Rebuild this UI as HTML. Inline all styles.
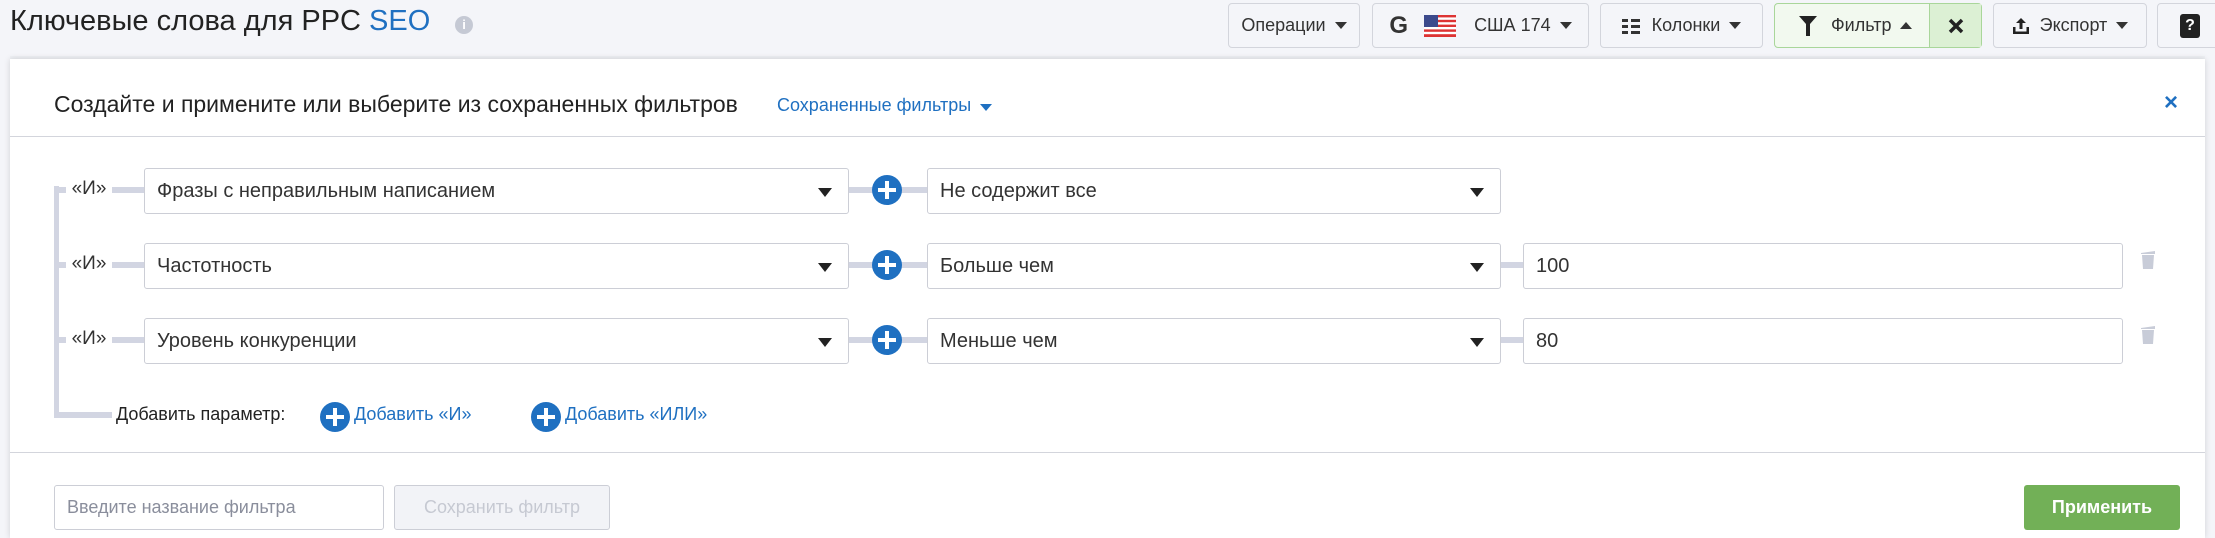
<!DOCTYPE html>
<html><head><meta charset="utf-8"><style>
*{box-sizing:border-box;margin:0;padding:0}
body{width:2215px;height:538px;background:#f4f5f9;font-family:"Liberation Sans","DejaVu Sans",sans-serif;color:#333;position:relative;overflow:hidden}
.a{position:absolute}
.btn{position:absolute;top:3px;height:45px;border:1px solid #d3d5dc;border-radius:4px;background:#f4f5f9;display:flex;align-items:center;justify-content:center;font-size:18px;color:#333}
.tri{display:inline-block;width:0;height:0;border-left:6px solid transparent;border-right:6px solid transparent;border-top:7px solid #333;margin-left:9px}
.triu{display:inline-block;width:0;height:0;border-left:6px solid transparent;border-right:6px solid transparent;border-bottom:7px solid #333;margin-left:9px}
.panel{position:absolute;left:10px;top:59px;width:2195px;height:479px;background:#fff;box-shadow:0 0 6px rgba(0,0,0,.15)}
.inp{position:absolute;height:46px;border:1px solid #ccced6;border-radius:3px;background:#fff;font-size:20px;color:#333;display:flex;align-items:center;padding-left:12px}
.dd::after{content:"";position:absolute;right:16px;top:19px;border-left:7px solid transparent;border-right:7px solid transparent;border-top:9px solid #222}
.and{position:absolute;font-size:19px;color:#333;width:44px;text-align:center}
.hl{position:absolute;height:6px;background:#d2d5e2}
.plus{position:absolute;width:30px;height:30px;border-radius:50%;background:#1f70c1}
.plus::before{content:"";position:absolute;left:6px;top:13px;width:18px;height:4px;background:#fff}
.plus::after{content:"";position:absolute;left:13px;top:6px;width:4px;height:18px;background:#fff}
.trash{position:absolute;width:16px;height:22px}
</style></head><body>
<div class="a" style="left:10px;top:5px;font-size:29px;color:#222">Ключевые слова для PPC <span style="color:#1f70c1">SEO</span></div>
<div class="a" style="left:455px;top:16px;width:18px;height:18px;border-radius:50%;background:#c5c9d4;color:#fff;font-size:13px;font-weight:bold;text-align:center;line-height:18px">i</div>

<div class="btn" style="left:1228px;width:132px">Операции<span class="tri"></span></div>
<div class="btn" style="left:1372px;width:217px"><span style="font-weight:bold;font-size:24px;margin-right:16px">G</span>
<svg width="32" height="22" viewBox="0 0 32 22" style="margin-right:18px"><rect width="32" height="22" fill="#fff"/><g fill="#d33"><rect y="0" width="32" height="2.4"/><rect y="4.8" width="32" height="2.4"/><rect y="9.6" width="32" height="2.4"/><rect y="14.4" width="32" height="2.4"/><rect y="19.2" width="32" height="2.8"/></g><rect width="14" height="12" fill="#3c4a8c"/></svg>США 174<span class="tri"></span></div>
<div class="btn" style="left:1600px;width:163px"><svg width="18" height="16" style="margin-right:12px"><g fill="#333"><rect x="0" y="1" width="6" height="3"/><rect x="9" y="1" width="9" height="3"/><rect x="0" y="7" width="6" height="3"/><rect x="9" y="7" width="9" height="3"/><rect x="0" y="13" width="6" height="3"/><rect x="9" y="13" width="9" height="3"/></g></svg>Колонки<span class="tri"></span></div>
<div class="btn" style="left:1774px;width:208px;background:#f2f9ef;border-color:#a9d69a;justify-content:flex-start;padding-left:24px"><svg width="18" height="20" style="margin-right:14px"><path d="M0 0H18L11 8V20H7V8Z" fill="#222"/></svg>Фильтр<span class="triu"></span></div>
<div class="a" style="left:1929px;top:4px;width:52px;height:43px;background:#dcf0d4;border-left:1px solid #a9d69a;display:flex;align-items:center;justify-content:center"><svg width="16" height="16"><path d="M2 2L14 14M14 2L2 14" stroke="#222" stroke-width="3.5"/></svg></div>
<div class="btn" style="left:1993px;width:154px"><svg width="18" height="18" style="margin-right:10px"><path d="M9 1L4 6H7.5V12H10.5V6H14Z M1 10V17H17V10H14.5V14.5H3.5V10Z" fill="#222"/></svg>Экспорт<span class="tri"></span></div>
<div class="btn" style="left:2157px;width:70px;justify-content:flex-start;padding-left:22px"><span style="background:#222;color:#fff;font-weight:bold;font-size:16px;width:20px;height:24px;border-radius:3px;display:inline-flex;align-items:center;justify-content:center">?</span></div>

<div class="a" style="left:10px;top:56px;width:2195px;height:4px;background:#eef0f4"></div>

<div class="panel">
<div class="a" style="left:44px;top:32px;font-size:23px;color:#222">Создайте и примените или выберите из сохраненных фильтров</div>
<div class="a" style="left:767px;top:36px;font-size:18px;color:#1f70c1">Сохраненные фильтры<span class="tri" style="border-top-color:#1f70c1"></span></div>
<div class="a" style="left:2154px;top:30px;font-size:24px;font-weight:bold;color:#1f70c1">×</div>
<div class="a" style="left:0;top:77px;width:2195px;height:1px;background:#d3d5dc"></div>

<div class="a" style="left:44px;top:127px;width:5px;height:231px;background:#d2d5e2"></div>
</div>

<div class="hl" style="left:54px;top:187px;width:12px"></div>
<div class="hl" style="left:54px;top:262px;width:12px"></div>
<div class="hl" style="left:54px;top:337px;width:12px"></div>
<div class="hl" style="left:54px;top:412px;width:58px"></div>

<div class="and" style="left:67px;top:178px">«И»</div>
<div class="and" style="left:67px;top:253px">«И»</div>
<div class="and" style="left:67px;top:328px">«И»</div>

<div class="hl" style="left:112px;top:187px;width:34px"></div>
<div class="hl" style="left:112px;top:262px;width:34px"></div>
<div class="hl" style="left:112px;top:337px;width:34px"></div>
<div class="hl" style="left:846px;top:187px;width:82px"></div>
<div class="hl" style="left:846px;top:262px;width:82px"></div>
<div class="hl" style="left:846px;top:337px;width:82px"></div>
<div class="hl" style="left:1498px;top:262px;width:28px"></div>
<div class="hl" style="left:1498px;top:337px;width:28px"></div>

<div class="inp dd" style="left:144px;top:168px;width:705px">Фразы с неправильным написанием</div>
<div class="inp dd" style="left:144px;top:243px;width:705px">Частотность</div>
<div class="inp dd" style="left:144px;top:318px;width:705px">Уровень конкуренции</div>
<div class="plus" style="left:872px;top:175px"></div>
<div class="plus" style="left:872px;top:250px"></div>
<div class="plus" style="left:872px;top:325px"></div>
<div class="inp dd" style="left:927px;top:168px;width:574px">Не содержит все</div>
<div class="inp dd" style="left:927px;top:243px;width:574px">Больше чем</div>
<div class="inp dd" style="left:927px;top:318px;width:574px">Меньше чем</div>
<div class="inp" style="left:1523px;top:243px;width:600px">100</div>
<div class="inp" style="left:1523px;top:318px;width:600px">80</div>
<svg class="trash" style="left:2140px;top:248px" viewBox="0 0 16 22"><path d="M1 5L15 3L15 6L1 6Z M2 7H14L13 21H3Z" fill="#c8ccd8"/></svg>
<svg class="trash" style="left:2140px;top:323px" viewBox="0 0 16 22"><path d="M1 5L15 3L15 6L1 6Z M2 7H14L13 21H3Z" fill="#c8ccd8"/></svg>

<div class="a" style="left:116px;top:404px;font-size:18px;color:#222">Добавить параметр:</div>
<div class="plus" style="left:320px;top:402px"></div>
<div class="a" style="left:354px;top:404px;font-size:18px;color:#1f70c1">Добавить «И»</div>
<div class="plus" style="left:531px;top:402px"></div>
<div class="a" style="left:565px;top:404px;font-size:18px;color:#1f70c1">Добавить «ИЛИ»</div>

<div class="a" style="left:10px;top:452px;width:2195px;height:1px;background:#d3d5dc"></div>
<div class="inp" style="left:54px;top:485px;width:330px;height:45px;color:#8a8e9c;font-size:18px">Введите название фильтра</div>
<div class="inp" style="left:394px;top:485px;width:216px;height:45px;background:#f2f3f7;color:#c6c9d2;justify-content:center;padding:0;font-size:18px">Сохранить фильтр</div>
<div class="a" style="left:2024px;top:485px;width:156px;height:45px;background:#72b057;border-radius:3px;color:#fff;font-size:18px;font-weight:bold;display:flex;align-items:center;justify-content:center">Применить</div>
</body></html>
